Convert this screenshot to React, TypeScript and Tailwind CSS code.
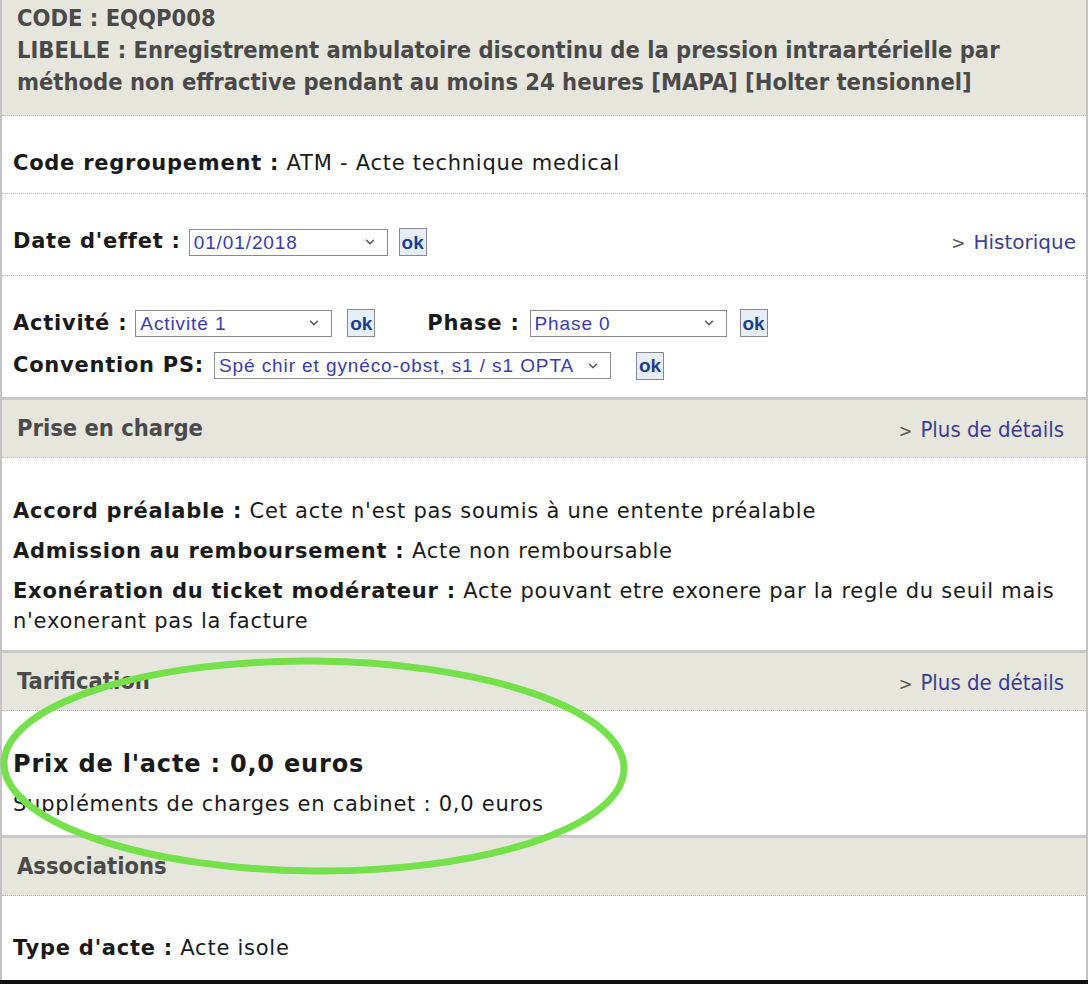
import { ChevronDown } from 'lucide-react';

const body = "font-['DejaVu_Sans','Verdana',sans-serif]";
const cond = "font-['DejaVu_Sans_Condensed','DejaVu_Sans',sans-serif]";

function Select({ value, width }: { value: string; width: string }) {
  return (
    <div
      className={`flex items-center justify-between h-[27px] border border-[#8a8a8a] bg-white pl-[4px] pr-[10px] ${width}`}
    >
      <span className="font-['Liberation_Sans',Arial,sans-serif] text-[19px] tracking-[0.9px] text-[#3b3bb0] leading-none whitespace-nowrap">
        {value}
      </span>
      <ChevronDown size={14} strokeWidth={2.5} className="text-[#555] shrink-0" />
    </div>
  );
}

function OkButton() {
  return (
    <button className="h-[28px] w-[28px] flex items-center justify-center border border-[#8a8a8a] bg-[#e6eef8] font-['Liberation_Sans',Arial,sans-serif] text-[19px] font-bold text-[#1c3f8c] leading-none tracking-normal">
      ok
    </button>
  );
}

function SectionHeader({ title, link }: { title: string; link?: string }) {
  return (
    <div className="h-[58px] bg-[#e6e6dd] border-b border-dotted border-[#b9b9b9] flex items-center justify-between pl-[15px] pr-[22px] pt-[1px]">
      <span className={`${cond} text-[23.5px] font-bold text-[#4a4a4a] tracking-normal`}>{title}</span>
      {link && (
        <span className={`${cond} text-[22px] text-[#3c3c96] tracking-normal`}>
          <span className="text-[#555] mr-[8px] text-[18px]">&gt;</span>
          {link}
        </span>
      )}
    </div>
  );
}

export default function App() {
  return (
    <div
      className={`relative w-[1088px] h-[984px] bg-white overflow-hidden flex flex-col ${body} text-[21px] tracking-[0.75px] text-[#1a1a1a]`}
    >
      <div className="flex flex-col flex-1 border-x-[2px] border-[#c4c4c4]">
        {/* Acte */}
        <div className="border-b-[3px] border-[#cacaca]">
          <div className="h-[116px] bg-[#e6e6dd] border-b border-dotted border-[#b9b9b9] pl-[15px] pr-[20px] pt-[2px]">
            <div className={`${cond} text-[23.5px] font-bold text-[#4a4a4a] leading-[32px] tracking-normal`}>
              <p>CODE : EQQP008</p>
              <p>
                LIBELLE : Enregistrement ambulatoire discontinu de la pression intraartérielle par
                méthode non effractive pendant au moins 24 heures [MAPA] [Holter tensionnel]
              </p>
            </div>
          </div>
          <div className="h-[78px] flex items-center pl-[11px] pt-[19px] border-b border-dotted border-[#b9b9b9]">
            <span>
              <b>Code regroupement :</b> ATM - Acte technique medical
            </span>
          </div>
          <div className="h-[82px] flex items-center justify-between pl-[11px] pr-[10px] pt-[15px] border-b border-dotted border-[#b9b9b9]">
            <div className="flex items-center">
              <b className="mr-[8px]">Date d'effet :</b>
              <Select value="01/01/2018" width="w-[199px]" />
              <div className="ml-[11px]">
                <OkButton />
              </div>
            </div>
            <span className="text-[#3c3c96] tracking-normal text-[20px]">
              <span className="text-[#555] mr-[8px] text-[17px]">&gt;</span>Historique
            </span>
          </div>
          <div className="h-[121px] flex flex-col justify-center gap-[11px] pl-[11px] pt-[16px]">
            <div className="flex items-center">
              <b className="mr-[8px]">Activité :</b>
              <Select value="Activité 1" width="w-[197px]" />
              <div className="ml-[15px]">
                <OkButton />
              </div>
              <b className="ml-[52px] mr-[10px]">Phase :</b>
              <Select value="Phase 0" width="w-[197px]" />
              <div className="ml-[13px]">
                <OkButton />
              </div>
            </div>
            <div className="flex items-center">
              <b className="mr-[10px]">Convention PS:</b>
              <Select value="Spé chir et gynéco-obst, s1 / s1 OPTA" width="w-[397px]" />
              <div className="ml-[25px]">
                <OkButton />
              </div>
            </div>
          </div>
        </div>

        {/* Prise en charge */}
        <div className="border-b-[3px] border-[#cacaca]">
          <SectionHeader title="Prise en charge" link="Plus de détails" />
          <div className="h-[192px] pl-[11px] pr-[20px] pt-[38px] flex flex-col gap-[10px] leading-[30px]">
            <p>
              <b>Accord préalable :</b> Cet acte n'est pas soumis à une entente préalable
            </p>
            <p>
              <b>Admission au remboursement :</b> Acte non remboursable
            </p>
            <p>
              <b>Exonération du ticket modérateur :</b> Acte pouvant etre exonere par la regle du seuil
              mais n'exonerant pas la facture
            </p>
          </div>
        </div>

        {/* Tarification */}
        <div className="border-b-[3px] border-[#cacaca]">
          <SectionHeader title="Tarification" link="Plus de détails" />
          <div className="h-[124px] pl-[11px] pt-[38px] flex flex-col gap-[10px] leading-[30px]">
            <p className="text-[24px] font-bold tracking-[0.8px]">Prix de l'acte : 0,0 euros</p>
            <p>Suppléments de charges en cabinet : 0,0 euros</p>
          </div>
        </div>

        {/* Associations */}
        <div className="flex-1 flex flex-col">
          <SectionHeader title="Associations" />
          <div className="flex-1 pl-[11px] pt-[37px] leading-[30px]">
            <p>
              <b>Type d'acte :</b> Acte isole
            </p>
          </div>
        </div>
      </div>
      <div className="h-[4px] bg-[#111]" />

      {/* Annotation */}
      <svg className="absolute left-0 top-0 pointer-events-none" width="1088" height="984">
        <ellipse
          cx="314"
          cy="766"
          rx="310"
          ry="105"
          transform="rotate(0.5 314 766)"
          fill="none"
          stroke="#74e04a"
          strokeWidth="7"
        />
      </svg>
    </div>
  );
}
